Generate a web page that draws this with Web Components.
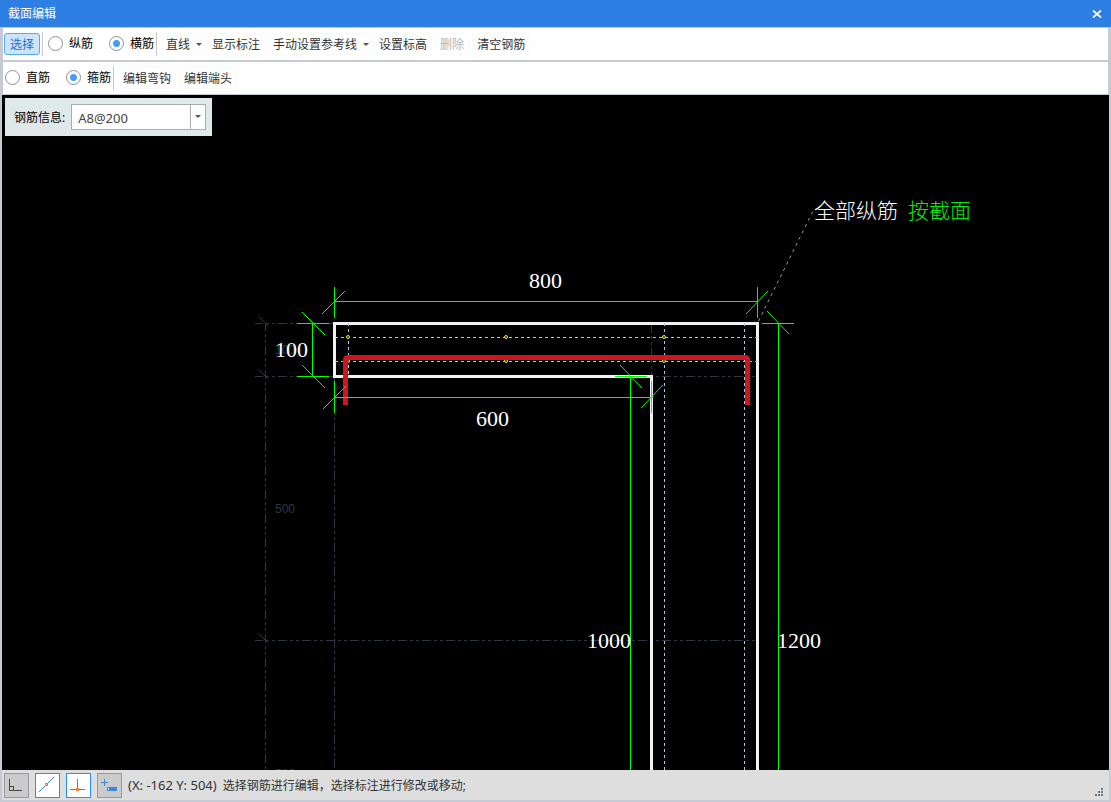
<!DOCTYPE html>
<html lang="zh-CN">
<head>
<meta charset="utf-8">
<title>截面编辑</title>
<style>
html, body { margin: 0; height: 100%; }
body { font: 12px/16px "Open Sans", "Noto Sans CJK SC", sans-serif; color: #333; --edge: #c5cad3; }
</style>
</head>
<body>
<section-editor></section-editor>
<script>
const define = (name, html, setup) => customElements.define(name, class extends HTMLElement {
  constructor() {
    super();
    this.attachShadow({ mode: "open" });
  }
  connectedCallback() {
    const t = document.createElement("template");
    t.innerHTML = html;
    this.shadowRoot.replaceChildren(t.content.cloneNode(true));
    if (setup) setup(this, this.shadowRoot);
  }
});

define("title-bar", `
<style>
:host { display: flex; align-items: center; justify-content: space-between; height: 27px; padding: 0 6px 0 8px; background: #2d7fe3; color: #fff; }
h1 { font: inherit; margin: 0; }
button { border: 0; background: none; padding: 0; width: 16px; height: 16px; color: inherit; }
svg { display: block; margin: auto; }
</style>
<h1><slot></slot></h1>
<button aria-label="关闭"><svg width="10" height="8" viewBox="0 0 10 8"><path d="M1 .5l8 7M9 .5l-8 7" stroke="currentColor" stroke-width="1.700"/></svg></button>`);

define("tool-row", `
<style>
:host { display: flex; align-items: center; height: 32px; margin: 0 1px; padding-left: 1px; background: #fff; }
</style>
<slot></slot>`);

define("tool-separator", `
<style>:host { display: block; width: 1px; height: 24px; margin: 0 4px 0 2px; background: #c8c8c8; }</style>`);

define("tool-group", `
<style>:host { display: flex; gap: 3px; }</style><slot></slot>`);

define("tool-button", `
<style>
:host { display: block; }
button { display: flex; align-items: center; box-sizing: border-box; height: 22px; padding: 2px 4px 0; border: 1px solid #fafafa; border-radius: 3px; background: #fff; font: inherit; color: #333; white-space: nowrap; }
button:disabled { color: #b4b4b4; }
:host([selected]) button { padding: 2px 5px 0; border-color: #5ba7f7; background: #cce4fc; color: #1a6fd0; }
svg { display: none; margin-left: 6px; margin-right: -3px; }
:host([menu]) svg { display: block; }
</style>
<button><slot></slot><svg width="6" height="4" viewBox="0 0 6 4"><path d="M0 0h6l-3 3z" fill="#555"/></svg></button>`,
(host, root) => { root.querySelector("button").disabled = host.hasAttribute("disabled"); });

define("radio-choice", `
<style>
:host { display: flex; gap: 16px; margin: 0 0 2px 1px; }
label { display: flex; align-items: center; gap: 6px; color: #000; white-space: nowrap; }
span { padding-top: 2px; }
input { appearance: none; box-sizing: border-box; width: 15px; height: 15px; margin: 0; border: 1px solid #909090; border-radius: 50%; background: #fff; }
input:checked { background: radial-gradient(circle, #459bf8 0 3px, #fff 4px); }
</style>`,
(host, root) => {
  for (const name of host.getAttribute("options").split(",")) {
    const label = document.createElement("label"), input = document.createElement("input"), text = document.createElement("span");
    input.type = "radio";
    input.name = "choice";
    input.checked = name === host.getAttribute("value");
    text.textContent = name;
    label.append(input, text);
    root.append(label);
  }
});

define("rebar-info", `
<style>
:host { display: flex; align-items: center; box-sizing: border-box; height: 38px; padding: 0 6px 0 9px; gap: 6px; background: #e0e9ea; color: #000; }
.combo { display: flex; box-sizing: border-box; width: 135px; height: 26px; border: 1px solid #abadb0; background: #fff; }
label { white-space: nowrap; padding-top: 2px; }
input { flex: 1; min-width: 0; border: 0; padding: 2px 6px 0; font: 13px "Noto Sans", sans-serif; color: #444; background: none; outline: 0; }
button { width: 15px; padding: 0; border: 0; border-left: 1px solid #abadb0; background: #fff; }
svg { display: block; margin: auto; }
</style>
<label for="info">钢筋信息:</label>
<div class="combo"><input id="info" value="A8@200"><button aria-label="展开"><svg width="6" height="4" viewBox="0 0 6 4"><path d="M0 0h6l-3 3z" fill="#555"/></svg></button></div>`);

define("section-drawing", `
<style>
:host { display: block; position: relative; overflow: hidden; background: #000; }
svg { position: absolute; inset: 0; width: 100%; height: 100%; }
rebar-info { position: absolute; left: 3px; top: 3px; }
.axis { stroke: #303744; stroke-dasharray: 9 3 3 3 3 3; stroke-dashoffset: 1; }
.tick { stroke: #303744; }
.faint { fill: #303744; font: 12px "Liberation Sans", sans-serif; }
.outline { stroke: #f2f2f2; stroke-width: 3; }
.cover { stroke: #a9c8ee; stroke-dasharray: 3 3; }
.bar { stroke: #cd161e; stroke-width: 5; }
.dim { stroke: #0f0; }
.value { fill: #fff; font: 22px "Liberation Serif", serif; }
.note { font: 300 21px "Noto Sans CJK SC", sans-serif; }
path { fill: none; }
</style>
<svg aria-label="截面图"><g transform="translate(-2 -95)">
<g shape-rendering="crispEdges">
<path class="axis" d="M255 323.5H334M255 376.5H757M255 640.5H757M265.5 323V2000M334.5 376V2000M651.5 325V376"/>
</g>
<path class="tick" d="M259 317l9 9M259 370l9 9M259 634l9 9"/>
<text class="faint" x="275" y="354">100</text><text class="faint" x="275" y="513">500</text><text class="faint" x="275" y="778">500</text>
<g shape-rendering="crispEdges">
<path class="outline" d="M651.5 2000V376.5H334.5V323.5H757.5V2000"/>
<path class="cover" d="M335 337.5H757M335 361.5H757M348.5 323V376M664.5 323V2000M744.5 323V2000"/>
</g>
<g fill="#302a00" stroke="#f0e030"><circle cx="348" cy="337" r="1.500"/><circle cx="348" cy="361" r="1.500"/><circle cx="506" cy="337" r="1.500"/><circle cx="506" cy="361" r="1.500"/><circle cx="664" cy="337" r="1.500"/><circle cx="664" cy="361" r="1.500"/></g>
<path class="bar" d="M345.500 405V360q0-2.500 2.500-2.500H745q2.500 0 2.500 2.500V405"/>
<path class="dim" shape-rendering="crispEdges" d="M334 301.500H758M334.500 287V318M757.500 287V318M312.500 323V377M297 323.500H329M297 376.500H329M334 397.500H652M334.500 381V413M651.500 381V413M630.500 376V2000M615 376.500H647M778.500 323V2000M762 323.500H794"/>
<path class="dim" d="M322 314l23-23M746 314l22-23M302 312l23 23M302 365l23 23M323 409l23-23M641 408l22-23M620 365l22 23M767 311l22 23"/>
<path d="M758.500 321L813 211" stroke="#999" stroke-dasharray="3 4"/>
<text class="value" x="529" y="288">800</text><text class="value" x="275" y="357">100</text><text class="value" x="476" y="426">600</text><text class="value" x="587" y="648">1000</text><text class="value" x="777" y="648">1200</text>
<text class="note" x="814" y="218" fill="#fff">全部纵筋</text><text class="note" x="908" y="218" fill="#0e0">按截面</text>
</g></svg>
<rebar-info></rebar-info>`);

define("snap-button", `
<style>
:host { display: block; }
button { box-sizing: border-box; display: block; width: 25px; height: 25px; padding: 0; border: 1px solid #9a9a9c; background: #cbcbcd; }
:host([on]) button { border-color: #2490ff; background: #fff; }
svg { display: block; margin: -1px; }
</style>
<button><svg width="25" height="25" viewBox="0 0 25 25" fill="none" shape-rendering="crispEdges"></svg></button>`,
(host, root) => {
  const icons = {
    "正交": '<path d="M5.500 6v11.500H18M5.500 13.500h4v4" stroke="#444"/>',
    "最近点": '<path d="M4 19L19 4" stroke="#3d86d6" shape-rendering="auto"/><path d="M10.500 10.500h2v2h-2z" stroke="#ee7b28" fill="#fbc9a0"/>',
    "垂足": '<path d="M11.500 6v10M4 16.500h15" stroke="#3d86d6"/><path d="M10.500 15.500h2v2h-2z" stroke="#ee7b28" fill="#fbc9a0"/>',
    "动态输入": '<path d="M7.500 6v7M4 9.500h7" stroke="#3d86d6"/><path d="M10 14h10v4H10z" fill="#3d86d6"/><path d="M11 15h1v2h-1z" fill="#dce8f5"/>'
  };
  const name = host.getAttribute("name");
  root.querySelector("button").setAttribute("aria-label", name);
  root.querySelector("svg").innerHTML = icons[name];
});

define("status-bar", `
<style>
:host { display: flex; align-items: center; gap: 6px; height: 30px; padding: 0 6px 0 2px; background: #dededf; white-space: nowrap; }
.grip { margin-left: auto; align-self: flex-end; padding-bottom: 4px; }
.grip svg { display: block; }
.text { padding-top: 2px; }
.xy { font: 13px/16px "Noto Sans", sans-serif; }
</style>
<snap-button name="正交"></snap-button><snap-button name="最近点" on></snap-button><snap-button name="垂足" on></snap-button><snap-button name="动态输入"></snap-button>
<span class="xy">(X: -162 Y: 504)</span><span class="text">选择钢筋进行编辑，选择标注进行修改或移动;</span>
<span class="grip"><svg width="8" height="8" viewBox="0 0 8 8"><path d="M6 0h2v2H6zM3 3h2v2H3zM6 3h2v2H6zM0 6h2v2H0zM3 6h2v2H3zM6 6h2v2H6z" fill="#6b7683"/></svg></span>`);

define("section-editor", `
<style>
:host { display: flex; flex-direction: column; height: 100vh; background: var(--edge); }
main { flex: 1; min-height: 0; display: flex; flex-direction: column; padding: 1px 2px 2px; }
section-drawing { flex: 1; margin-top: 1px; }
tool-row + tool-row { margin-top: 2px; }
</style>
<title-bar>截面编辑</title-bar>
<main>
<tool-row><tool-button selected>选择</tool-button><tool-separator></tool-separator><radio-choice options="纵筋,横筋" value="横筋"></radio-choice><tool-separator></tool-separator>
<tool-group><tool-button menu>直线</tool-button><tool-button>显示标注</tool-button><tool-button menu>手动设置参考线</tool-button><tool-button>设置标高</tool-button><tool-button disabled>删除</tool-button><tool-button>清空钢筋</tool-button></tool-group></tool-row>
<tool-row><radio-choice options="直筋,箍筋" value="箍筋"></radio-choice><tool-separator></tool-separator><tool-group><tool-button>编辑弯钩</tool-button><tool-button>编辑端头</tool-button></tool-group></tool-row>
<section-drawing></section-drawing>
<status-bar></status-bar>
</main>`);
</script>
</body>
</html>
